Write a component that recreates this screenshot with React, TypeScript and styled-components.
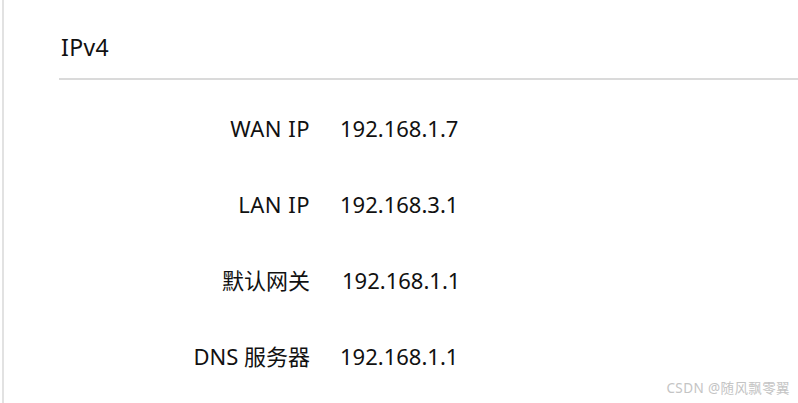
import React from 'react'
import styled, { createGlobalStyle } from 'styled-components'

const GlobalStyle = createGlobalStyle`
  html, body {
    margin: 0;
    padding: 0;
    background: #ffffff;
  }
  body {
    font-family: 'Noto Sans', 'Noto Sans CJK SC', sans-serif;
    color: #111111;
    overflow: hidden;
  }
`

const Page = styled.div`
  position: relative;
  width: 798px;
  height: 403px;
  box-sizing: border-box;
  padding-left: 2px;
`

const Panel = styled.section`
  height: 100%;
  box-sizing: border-box;
  border-left: 2px solid #e2e2e2;
  padding-left: 55px;
`

const Header = styled.h2`
  margin: 0;
  padding: 32px 0 16px 2px;
  line-height: 30px;
  font-size: 23px;
  font-weight: 400;
  letter-spacing: 0.4px;
  border-bottom: 2px solid #dadada;
`

const Rows = styled.dl`
  margin: 0;
  padding-top: 10px;
  display: grid;
  grid-template-columns: 251px 1fr;
  grid-auto-rows: 76px;
  column-gap: 30px;
  align-items: center;
  font-size: 22px;
`

const Label = styled.dt<{ $latin?: boolean }>`
  text-align: right;
  line-height: 30px;
  letter-spacing: ${(p) => (p.$latin ? '0.5px' : '0')};
`

const Value = styled.dd<{ $shift?: number }>`
  margin: 0 0 0 ${(p) => p.$shift ?? 0}px;
  line-height: 30px;
`

const Watermark = styled.div`
  position: absolute;
  right: 8px;
  bottom: 6px;
  font-size: 13.5px;
  color: #c4c4c4;
  letter-spacing: 0.4px;
`

const rows = [
  { label: 'WAN IP', value: '192.168.1.7', latin: true },
  { label: 'LAN IP', value: '192.168.3.1', latin: true },
  { label: '默认网关', value: '192.168.1.1', shift: 2 },
  { label: 'DNS 服务器', value: '192.168.1.1' },
]

export default function App() {
  return (
    <>
      <GlobalStyle />
      <Page>
        <Panel>
          <Header>IPv4</Header>
          <Rows>
            {rows.map((r) => (
              <React.Fragment key={r.label}>
                <Label $latin={r.latin}>{r.label}</Label>
                <Value $shift={r.shift}>{r.value}</Value>
              </React.Fragment>
            ))}
          </Rows>
        </Panel>
        <Watermark>CSDN @随风飘零翼</Watermark>
      </Page>
    </>
  )
}
